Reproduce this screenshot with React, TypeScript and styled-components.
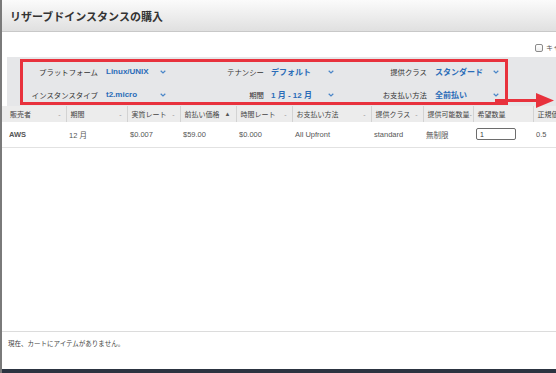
import styled, { createGlobalStyle } from "styled-components";

const GlobalStyle = createGlobalStyle`
  html, body {
    margin: 0;
    padding: 0;
    background: #fff;
  }
  body {
    font-family: "Liberation Sans", "Noto Sans CJK JP", sans-serif;
  }
`;

const Page = styled.div`
  position: relative;
  width: 556px;
  height: 373px;
  box-sizing: border-box;
  overflow: hidden;
  border-left: 2px solid #7a7a7a;
  display: flex;
  flex-direction: column;
  background: #fff;
`;

const TitleBar = styled.header`
  flex: none;
  height: 31px;
  display: flex;
  align-items: center;
  padding-left: 8px;
  background: linear-gradient(#fbfbfb, #e0e0e0);
  border-bottom: 1px solid #c8c8c8;
  font-size: 11px;
  font-weight: bold;
  color: #333;
`;

const Toolbar = styled.div`
  flex: none;
  height: 25px;
  box-sizing: border-box;
  padding-top: 12px;
  display: flex;
  justify-content: flex-end;
  align-items: flex-start;
`;

const CheckLabel = styled.label`
  width: 21px;
  display: flex;
  align-items: center;
  gap: 3px;
  overflow: hidden;
  white-space: nowrap;
  font-size: 7px;
  line-height: 8px;
  color: #555;
`;

const CheckBox = styled.span`
  flex: none;
  width: 8px;
  height: 8px;
  box-sizing: border-box;
  border: 1px solid #8a8a8a;
  border-radius: 2px;
  background: linear-gradient(#fff, #eee);
`;

const FilterPanel = styled.div`
  flex: none;
  height: 49px;
  box-sizing: border-box;
  margin-left: 5px;
  padding-top: 3px;
  background: #e6e7e9;
  display: grid;
  grid-template-columns: 99px 54px 10px 101px 57px 8px 99px 58px 8px;
  grid-auto-rows: 23px;
  align-items: center;
`;

const FilterLabel = styled.span<{ gap: number }>`
  text-align: right;
  padding-right: ${(p) => p.gap}px;
  font-size: 7.4px;
  color: #333;
  white-space: nowrap;
`;

const FilterValue = styled.span`
  font-size: 8px;
  font-weight: bold;
  color: #2a6cb8;
  white-space: nowrap;
`;

const ChevronBox = styled.span`
  display: flex;
  align-items: center;
`;

const Chevron = () => (
  <ChevronBox>
    <svg width="6" height="4" viewBox="0 0 6 4">
      <polyline
        points="0.7,0.8 3,3 5.3,0.8"
        fill="none"
        stroke="#4a86c8"
        strokeWidth="1.2"
      />
    </svg>
  </ChevronBox>
);

const TableWrap = styled.div`
  flex: none;
  overflow: hidden;
`;

const Table = styled.table`
  width: 598px;
  table-layout: fixed;
  border-collapse: collapse;
`;

const HeadRow = styled.tr`
  height: 16px;
  background: #ececec;
`;

const HeadCell = styled.th<{ first?: boolean }>`
  padding: 0 5px 0 ${(p) => (p.first ? 8 : 4)}px;
  border-right: 1px solid #d3d3d3;
  font-size: 7px;
  font-weight: normal;
  color: #444;
  text-align: left;
  white-space: nowrap;
`;

const HeadInner = styled.div`
  display: flex;
  justify-content: space-between;
  align-items: center;
`;

const SortMark = styled.span<{ active?: boolean }>`
  font-size: ${(p) => (p.active ? 6 : 7)}px;
  color: ${(p) => (p.active ? "#555" : "#999")};
`;

const DataRow = styled.tr`
  height: 25px;
  border-bottom: 1px solid #e2e2e2;
`;

const DataCell = styled.td<{ first?: boolean }>`
  padding: 0 0 0 ${(p) => (p.first ? 7 : 3)}px;
  font-size: 7.5px;
  color: #555;
  font-weight: ${(p) => (p.first ? "bold" : "normal")};
  white-space: nowrap;
`;

const QtyInput = styled.input`
  width: 40px;
  height: 12px;
  box-sizing: border-box;
  border: 1px solid #6d6d6d;
  border-radius: 2px;
  padding: 0 3px;
  font-family: inherit;
  font-size: 7px;
  color: #333;
`;

const Spacer = styled.div`
  flex: 1;
`;

const CartBar = styled.div`
  flex: none;
  height: 38px;
  box-sizing: border-box;
  border-top: 1px solid #dcdcdc;
  padding: 7px 0 0 6px;
  font-size: 6.5px;
  line-height: 9px;
  color: #444;
`;

const BottomBar = styled.div`
  flex: none;
  height: 4px;
  background: #2c3441;
`;

const Highlight = styled.div`
  position: absolute;
  left: 18px;
  top: 59px;
  width: 488px;
  height: 46px;
  box-sizing: border-box;
  border: 3px solid #e8323d;
  pointer-events: none;
`;

const ArrowSvg = styled.svg`
  position: absolute;
  left: 491px;
  top: 91px;
`;

const filters = [
  ["プラットフォーム", "Linux/UNIX", "テナンシー", "デフォルト", "提供クラス", "スタンダード"],
  ["インスタンスタイプ", "t2.micro", "期間", "1 月 - 12 月", "お支払い方法", "全前払い"],
];

const gaps = [8, 7, 8];

const columns: { name: string; width: number; sort?: "none" | "up" }[] = [
  { name: "販売者", width: 64, sort: "none" },
  { name: "期間", width: 61, sort: "none" },
  { name: "実質レート", width: 53, sort: "none" },
  { name: "前払い価格", width: 56, sort: "up" },
  { name: "時間レート", width: 56, sort: "none" },
  { name: "お支払い方法", width: 79, sort: "none" },
  { name: "提供クラス", width: 52, sort: "none" },
  { name: "提供可能数量", width: 50, sort: "none" },
  { name: "希望数量", width: 60 },
  { name: "正規価格", width: 67 },
];

const row = ["AWS", "12 月", "$0.007", "$59.00", "$0.000", "All Upfront", "standard", "無制限", "", "0.5"];

export default function App() {
  return (
    <>
      <GlobalStyle />
      <Page>
        <TitleBar>リザーブドインスタンスの購入</TitleBar>
        <Toolbar>
          <CheckLabel>
            <CheckBox />
            キャンセル済みを表示
          </CheckLabel>
        </Toolbar>
        <FilterPanel>
          {filters.map((f) =>
            [0, 1, 2].map((i) => [
              <FilterLabel key={`l${f[0]}${i}`} gap={gaps[i]}>
                {f[i * 2]}
              </FilterLabel>,
              <FilterValue key={`v${f[0]}${i}`}>{f[i * 2 + 1]}</FilterValue>,
              <Chevron key={`c${f[0]}${i}`} />,
            ])
          )}
        </FilterPanel>
        <TableWrap>
          <Table>
            <colgroup>
              {columns.map((c) => (
                <col key={c.name} style={{ width: c.width }} />
              ))}
            </colgroup>
            <thead>
              <HeadRow>
                {columns.map((c, i) => (
                  <HeadCell key={c.name} first={i === 0}>
                    <HeadInner>
                      <span>{c.name}</span>
                      {c.sort === "none" && <SortMark>-</SortMark>}
                      {c.sort === "up" && <SortMark active>▲</SortMark>}
                    </HeadInner>
                  </HeadCell>
                ))}
              </HeadRow>
            </thead>
            <tbody>
              <DataRow>
                {row.map((v, i) => (
                  <DataCell key={i} first={i === 0}>
                    {i === 8 ? <QtyInput defaultValue="1" /> : v}
                  </DataCell>
                ))}
              </DataRow>
            </tbody>
          </Table>
        </TableWrap>
        <Spacer />
        <CartBar>現在、カートにアイテムがありません。</CartBar>
        <BottomBar />
        <Highlight />
        <ArrowSvg width="65" height="20" viewBox="0 0 65 20">
          <line x1="2" y1="9.5" x2="46" y2="9.5" stroke="#e8323d" strokeWidth="3" />
          <polygon points="43,2 61,9.5 43,17" fill="#e8323d" />
        </ArrowSvg>
      </Page>
    </>
  );
}
